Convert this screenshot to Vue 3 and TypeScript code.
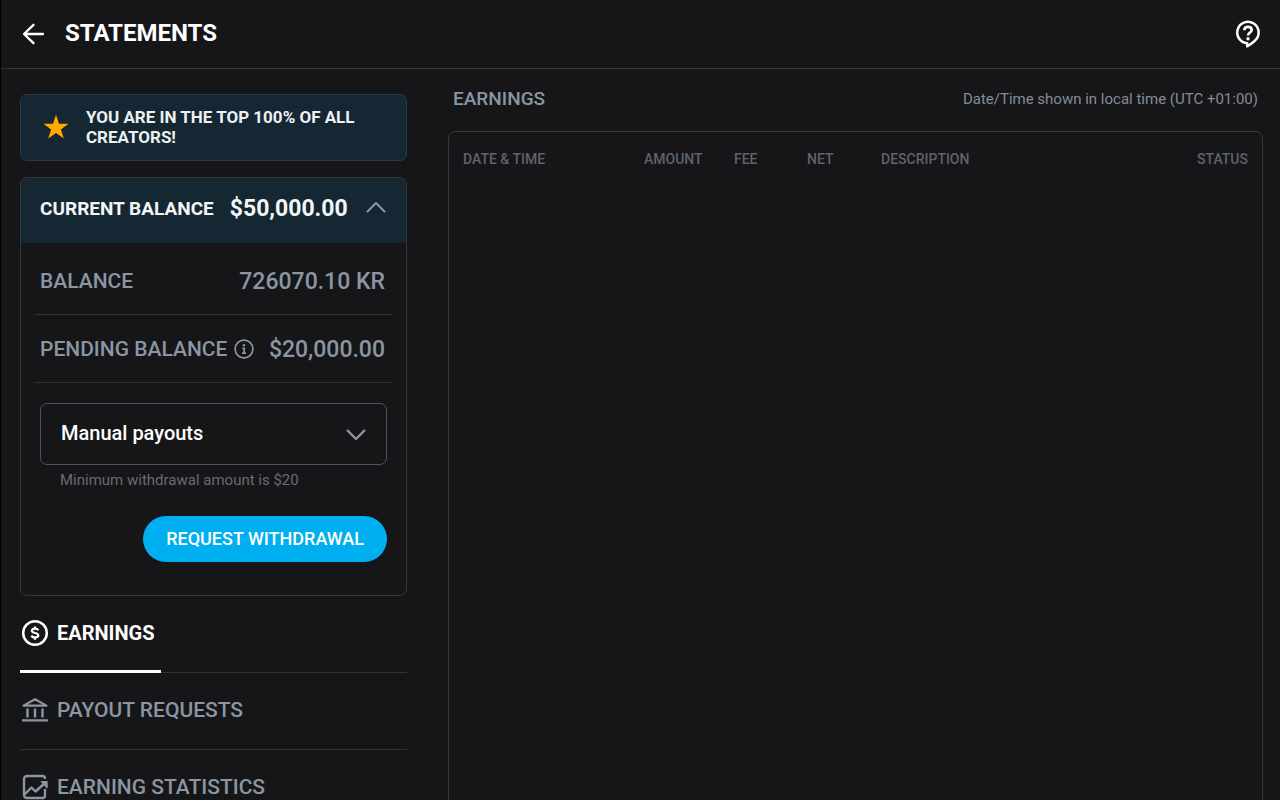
<script setup lang="ts">
import { ref } from 'vue'

interface NavItem {
  id: string
  label: string
}

interface Column {
  id: string
  label: string
}

const navItems: NavItem[] = [
  { id: 'earnings', label: 'EARNINGS' },
  { id: 'payouts', label: 'PAYOUT REQUESTS' },
  { id: 'statistics', label: 'EARNING STATISTICS' },
]

const columns: Column[] = [
  { id: 'date', label: 'DATE & TIME' },
  { id: 'amount', label: 'AMOUNT' },
  { id: 'fee', label: 'FEE' },
  { id: 'net', label: 'NET' },
  { id: 'description', label: 'DESCRIPTION' },
  { id: 'status', label: 'STATUS' },
]

const active = ref<string>('earnings')
const expanded = ref<boolean>(true)
const payoutMode = ref<string>('manual')
</script>

<template>
  <div class="page">
    <header class="topbar">
      <button class="icon-button" type="button" aria-label="Back">
        <svg width="24" height="24" viewBox="0 0 24 24" fill="none" stroke="currentColor" stroke-width="2.3" stroke-linecap="round" stroke-linejoin="round">
          <path d="M12.500 2.800 3 12l9.500 9.200M3.200 12H22" />
        </svg>
      </button>
      <h1>STATEMENTS</h1>
      <button class="icon-button help" type="button" aria-label="Help">
        <svg width="28" height="30" viewBox="0 0 28 30" fill="none" stroke="currentColor" stroke-linecap="round" stroke-linejoin="round">
          <path stroke-width="2.500" d="M13.200 24.200A10.700 10.700 0 1 1 21.200 21.400C19.200 23.600 16.400 25.500 13.200 27.300Z" />
          <path stroke-width="2.600" stroke-linecap="butt" d="M10.300 11.200C10.300 8.900 12 7.900 14 7.900s3.700 1.100 3.700 3.100c0 2.500-3.700 2.600-3.700 5.500" />
          <circle cx="14" cy="19.700" r="1.700" fill="currentColor" stroke="none" />
        </svg>
      </button>
    </header>

    <div class="content">
      <aside class="sidebar">
        <div class="notice">
          <svg class="star" width="26" height="26" viewBox="0 0 26 26" fill="#ffaa00">
            <path d="M13 0.800 16 9.800H25.600L17.900 15.400 20.800 24.600 13 19 5.200 24.600 8.100 15.400 0.400 9.800H10Z" />
          </svg>
          <p>YOU ARE IN THE TOP 100% OF ALL CREATORS!</p>
        </div>

        <section class="card">
          <button class="card-head" type="button" :aria-expanded="expanded" @click="expanded = !expanded">
            <span class="head-label">CURRENT BALANCE</span>
            <span class="head-amount">$50,000.00</span>
            <svg class="chevron" width="20" height="12" viewBox="0 0 20 12" fill="none" stroke="currentColor" stroke-width="2" stroke-linecap="round" stroke-linejoin="round">
              <path d="M1.500 10.500 10 2l8.500 8.500" />
            </svg>
          </button>
          <div v-if="expanded" class="card-body">
            <div class="row">
              <span class="row-label">BALANCE</span>
              <span class="row-amount">726070.10 KR</span>
            </div>
            <div class="row">
              <span class="row-label">PENDING BALANCE</span>
              <button class="icon-button info" type="button" aria-label="About pending balance">
                <svg width="20" height="20" viewBox="0 0 20 20" fill="none" stroke="currentColor">
                  <circle cx="10" cy="10" r="8.900" stroke-width="1.700" />
                  <circle cx="10" cy="6.200" r="1.200" fill="currentColor" stroke="none" />
                  <path stroke-width="1.700" d="M8.300 9.300H10.200V14M8.100 14.200H12" />
                </svg>
              </button>
              <span class="row-amount">$20,000.00</span>
            </div>
            <div class="payout">
              <div class="select-wrap">
                <select id="payout-mode" v-model="payoutMode" aria-label="Payout mode">
                  <option value="manual">Manual payouts</option>
                  <option value="weekly">Weekly payouts</option>
                  <option value="monthly">Monthly payouts</option>
                </select>
                <svg class="caret" width="20" height="12" viewBox="0 0 20 12" fill="none" stroke="currentColor" stroke-width="2.400" stroke-linecap="round" stroke-linejoin="round">
                  <path d="M1.700 1.700 10 10l8.300-8.300" />
                </svg>
              </div>
              <p class="hint">Minimum withdrawal amount is $20</p>
              <button class="withdraw" type="button">REQUEST WITHDRAWAL</button>
            </div>
          </div>
        </section>

        <nav>
          <a
            v-for="item in navItems"
            :key="item.id"
            :href="'#' + item.id"
            class="nav-item"
            :class="{ active: active === item.id }"
            @click="active = item.id"
          >
            <span class="nav-inner">
              <svg v-if="item.id === 'earnings'" width="28" height="28" viewBox="0 0 28 28" fill="none" stroke="currentColor">
                <circle cx="14" cy="14" r="11.800" stroke-width="2.500" />
                <path stroke-width="2.200" d="M17.300 11.400C16.800 10.200 15.600 9.700 14 9.700c-1.900 0-3.200.8-3.200 2.100 0 1.400 1.400 1.800 3.200 2.200s3.300.9 3.300 2.300-1.400 2.100-3.300 2.100c-1.700 0-3-.6-3.500-1.900M14 7.400V10M14 18v2.700" />
              </svg>
              <svg v-else-if="item.id === 'payouts'" width="28" height="28" viewBox="0 0 28 28" fill="none" stroke="currentColor" stroke-linejoin="round">
                <path stroke-width="2.200" d="M2.500 9.600 14 3.200l11.500 6.400Z" />
                <path stroke-width="2.400" d="M6.500 12.500V21.500M14 12.500V21.500M21.500 12.500V21.500M1 24.400H27" />
              </svg>
              <svg v-else width="28" height="28" viewBox="0 0 28 28" fill="none" stroke="currentColor" stroke-width="2.400" stroke-linejoin="round">
                <path d="M24 6V5.500a2.500 2.500 0 0 0-2.500-2.500H6a3 3 0 0 0-3 3V22a3 3 0 0 0 3 3H21.500a2.500 2.500 0 0 0 2.500-2.500V16" />
                <path d="M3.800 21.200 10.500 14.500l4 4L24.500 9.500" />
                <path d="M20.500 8.700H26V14.500Z" fill="currentColor" stroke-width="1.400" />
              </svg>
              {{ item.label }}
            </span>
          </a>
        </nav>
      </aside>

      <main class="main">
        <div class="main-head">
          <h2>EARNINGS</h2>
          <p>Date/Time shown in local time (UTC +01:00)</p>
        </div>
        <div class="panel">
          <table>
            <thead>
              <tr>
                <th v-for="column in columns" :key="column.id" scope="col" :class="'col-' + column.id">{{ column.label }}</th>
              </tr>
            </thead>
            <tbody></tbody>
          </table>
        </div>
      </main>
    </div>
  </div>
</template>

<style>
body {
  margin: 0;
  background: #161618;
}
</style>

<style scoped>
.page {
  box-sizing: border-box;
  min-height: 100vh;
  display: flex;
  flex-direction: column;
  border-left: 1px solid #000;
  background: #161618;
  color: #8a96a3;
  font-family: Roboto, "Liberation Sans", sans-serif;
  font-weight: 500;
}

h1,
h2,
p {
  margin: 0;
}

button {
  font: inherit;
  border: 0;
  cursor: pointer;
}

svg {
  display: block;
  flex: none;
}

.icon-button {
  padding: 0;
  background: none;
  color: inherit;
}

.topbar {
  display: flex;
  align-items: center;
  height: 68px;
  padding: 0 18px 0 20px;
  border-bottom: 1px solid #34363a;
  color: #fefefe;
}

h1 {
  margin-left: 20px;
  padding-bottom: 2px;
  font-size: 24px;
  line-height: 28px;
  font-weight: 700;
}

.help {
  margin-left: auto;
}

.content {
  flex: 1;
  display: grid;
  grid-template-columns: minmax(0, 387fr) minmax(0, 815fr);
  gap: 41px;
  padding: 0 17px 0 19px;
}

.sidebar {
  padding-top: 25px;
}

.notice {
  display: flex;
  align-items: center;
  box-sizing: border-box;
  min-height: 67px;
  padding: 0 40px 2px 22px;
  gap: 17px;
  border: 1px solid #283b46;
  border-radius: 7px;
  background: #152732;
  color: #eef0f2;
  font-size: 17px;
  line-height: 20px;
  font-weight: 700;
}

.card {
  margin-top: 16px;
  border: 1px solid #34363a;
  border-radius: 7px;
  overflow: hidden;
}

.card-head {
  display: flex;
  align-items: center;
  width: 100%;
  height: 65px;
  padding: 0 20px 4px 19px;
  background: #152732;
  color: #f4f5f6;
  font-size: 19px;
  font-weight: 700;
}

.head-amount {
  margin-left: 16px;
  font-size: 23px;
}

.chevron {
  margin-left: auto;
  padding-bottom: 3px;
  color: #8a96a3;
}

.card-body {
  padding: 4px 14px 33px;
}

.row {
  display: flex;
  align-items: center;
  height: 67px;
  padding: 0 7px 0 5px;
  border-bottom: 1px solid #303338;
}

.row-label {
  font-size: 21px;
}

.row-amount {
  margin-left: auto;
  padding-top: 2px;
  font-size: 23px;
}

.info {
  margin-left: 7px;
}

.payout {
  display: flex;
  flex-direction: column;
  padding: 20px 5px 0;
}

.select-wrap {
  position: relative;
}

select {
  box-sizing: border-box;
  display: block;
  width: 100%;
  height: 62px;
  padding: 0 50px 2px 20px;
  border: 1px solid #50545c;
  border-radius: 7px;
  appearance: none;
  background: transparent;
  color: #fefefe;
  font: inherit;
  font-size: 20px;
}

select option {
  background: #161618;
}

.caret {
  position: absolute;
  top: 26px;
  right: 21px;
  pointer-events: none;
}

.hint {
  padding: 5px 20px 0;
  color: #646c76;
  font-size: 15px;
  line-height: 20px;
  font-weight: 400;
}

.withdraw {
  align-self: flex-end;
  height: 46px;
  margin-top: 26px;
  padding: 0 23px 2px;
  border-radius: 23px;
  background: #00aff0;
  color: #fefefe;
  font-size: 18px;
}

.nav-item {
  display: block;
  height: 76px;
  border-bottom: 1px solid #303338;
  color: inherit;
  font-size: 21px;
  text-decoration: none;
}

.nav-inner {
  display: inline-flex;
  align-items: center;
  box-sizing: border-box;
  height: 77px;
  gap: 8px;
  padding: 0 6px 3px 1px;
}

.nav-item.active {
  color: #fefefe;
  font-size: 20px;
  font-weight: 700;
}

.nav-item.active .nav-inner {
  padding-bottom: 0;
  border-bottom: 3px solid #fefefe;
}

.main {
  display: flex;
  flex-direction: column;
}

.main-head {
  display: flex;
  align-items: center;
  justify-content: space-between;
  height: 62px;
  padding: 0 5px 3px;
  box-sizing: border-box;
}

h2 {
  font-size: 19px;
  font-weight: 500;
}

.main-head p {
  color: #828c98;
  font-size: 15px;
  font-weight: 400;
}

.panel {
  flex: 1;
  padding: 0 14px;
  border: 1px solid #34363a;
  border-radius: 7px;
}

table {
  width: 100%;
  table-layout: fixed;
  border-collapse: collapse;
}

th {
  height: 53px;
  padding: 0;
  color: #5c646e;
  font-size: 14px;
  font-weight: 500;
  text-align: left;
  white-space: nowrap;
}

.col-date {
  width: 181px;
}

.col-amount {
  width: 90px;
}

.col-fee {
  width: 73px;
}

.col-net {
  width: 74px;
}

.col-status {
  width: 80px;
  text-align: right;
}
</style>
